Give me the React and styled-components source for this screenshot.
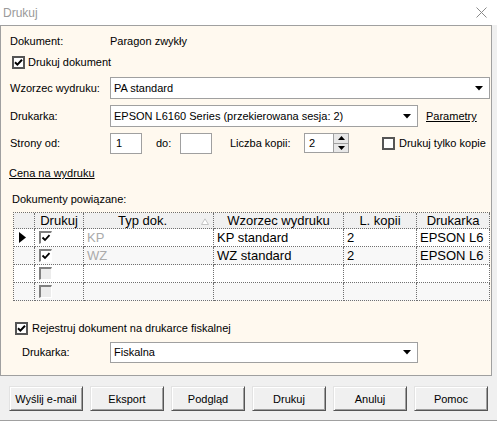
import React from 'react';
import styled, { createGlobalStyle } from 'styled-components';

const GlobalStyle = createGlobalStyle`
  html, body { margin: 0; padding: 0; background: #f0f0f0; }
  body {
    font-family: "Liberation Sans", Arial, sans-serif;
    font-size: 11px;
    color: #000;
  }
`;

const Window = styled.div`
  width: 497px;
  height: 421px;
  box-sizing: border-box;
  display: flex;
  flex-direction: column;
  background: #f0f0f0;
  border-bottom: 1px solid #a0a0a0;
  overflow: hidden;
`;

const TitleBar = styled.div`
  height: 25px;
  flex: none;
  background: #fff;
  display: flex;
  align-items: center;
  justify-content: space-between;
  padding: 0 10px 0 3px;
  color: #9a9a9a;
  font-size: 12px;
`;

const Panel = styled.div`
  height: 351px;
  width: 492px;
  flex: none;
  box-sizing: border-box;
  background: #fff9ef;
  border: 1px solid #a0a0a0;
  display: flex;
  flex-direction: column;
`;

const Row = styled.div`
  display: flex;
  align-items: center;
  height: ${p => p.$h || 16}px;
  margin-top: ${p => p.$mt || 0}px;
  padding-left: ${p => p.$pl ?? 9}px;
  white-space: nowrap;
`;

const Label = styled.span`
  width: ${p => p.$w || 100}px;
  flex: none;
`;

const Gap = styled.span`
  width: ${p => p.$w}px;
  flex: none;
`;

const LinkText = styled.span`
  text-decoration: underline;
  cursor: pointer;
`;

const Select = styled.div`
  width: ${p => p.$w}px;
  height: ${p => p.$h || 22}px;
  box-sizing: border-box;
  background: #fff;
  border: 1px solid #a0a0a0;
  display: flex;
  align-items: center;
  justify-content: space-between;
  padding: 0 6px 0 3px;
`;

const Arrow = () => (
  <svg width="8" height="5" viewBox="0 0 8 5">
    <path d="M0 0 H8 L4 4.5 Z" fill="#000" />
  </svg>
);

const TextBox = styled.div`
  width: ${p => p.$w}px;
  height: 21px;
  box-sizing: border-box;
  background: #fff;
  border: 1px solid #a0a0a0;
  display: flex;
  align-items: center;
  padding-left: 5px;
`;

const Spinner = styled.div`
  display: flex;
  height: 20px;
`;

const SpinText = styled(TextBox)`
  width: 30px;
  height: 20px;
  padding-left: 4px;
`;

const SpinButtons = styled.div`
  width: 15px;
  display: flex;
  flex-direction: column;
  border: 1px solid #a0a0a0;
  border-left: none;
  box-sizing: border-box;
`;

const SpinButton = styled.div`
  flex: 1;
  display: flex;
  align-items: center;
  justify-content: center;
  background: #e8e8e8;
  border-top: ${p => (p.$down ? '1px solid #a0a0a0' : 'none')};
`;

const CheckBox = styled.span`
  width: 13px;
  height: 13px;
  box-sizing: border-box;
  flex: none;
  border: 2px solid #555;
  background: #fff;
  display: flex;
  align-items: center;
  justify-content: center;
  margin-right: ${p => p.$mr ?? 3}px;
`;

const Check = () => (
  <svg width="9" height="9" viewBox="0 0 9 9">
    <path d="M1 4.2 L3.4 6.6 L8 1.8" stroke="#000" strokeWidth="2" fill="none" />
  </svg>
);

const Table = styled.div`
  margin: 5px 0 0 12px;
  width: 476px;
  display: grid;
  grid-template-columns: 21px 49px 130px 130px 73px 73px;
  grid-template-rows: 16px repeat(4, 18px);
  border-top: 1px dotted #6f6f6f;
  border-left: 1px dotted #6f6f6f;
  box-sizing: content-box;
  font-size: 13px;
`;

const Cell = styled.div`
  box-sizing: border-box;
  border-right: 1px dotted #6f6f6f;
  border-bottom: 1px dotted #6f6f6f;
  background: ${p => (p.$head ? '#f0f0f0' : p.$alt ? '#f8f8f8' : '#fff')};
  color: ${p => (p.$dim ? '#ababab' : '#000')};
  display: flex;
  align-items: center;
  justify-content: ${p => (p.$center ? 'center' : 'flex-start')};
  padding-left: ${p => (p.$center ? 0 : 3)}px;
  padding-right: ${p => (p.$shift ? p.$shift : 0)}px;
  overflow: hidden;
  white-space: nowrap;
  position: relative;
  line-height: 1;
`;

const SortMark = styled.svg`
  position: absolute;
  right: 4px;
  top: 5px;
`;

const GridCheck = styled.span`
  width: 13px;
  height: 13px;
  box-sizing: border-box;
  margin-left: 1px;
  border-top: 2px solid #808080;
  border-left: 2px solid #808080;
  border-right: 1px solid #fff;
  border-bottom: 1px solid #fff;
  background: ${p => (p.$off ? '#ececec' : '#fff')};
  display: flex;
  align-items: center;
  justify-content: center;
`;

const GridTick = () => (
  <svg width="10" height="10" viewBox="0 0 10 10">
    <path d="M1.5 4.5 L4 7 L8.5 2.2" stroke="#000" strokeWidth="1.8" fill="none" />
  </svg>
);

const Pointer = () => (
  <svg width="7" height="11" viewBox="0 0 7 11">
    <path d="M0 0 L7 5.5 L0 11 Z" fill="#000" />
  </svg>
);

const ButtonBar = styled.div`
  display: flex;
  gap: 7px;
  padding: 10px 0 0 9px;
`;

const Button = styled.button`
  width: 74px;
  height: 25px;
  padding: 0;
  font-family: "Liberation Sans", Arial, sans-serif;
  font-size: 11px;
  color: #000;
  background: #f0f0f0;
  border: 1px solid;
  border-color: #e3e3e3 #555 #555 #e3e3e3;
  box-shadow: inset 1px 1px #fff, inset -1px -1px #a0a0a0;
`;

const rows = [
  { typ: 'KP', wz: 'KP standard', kop: '2', dr: 'EPSON L6', on: true, current: true },
  { typ: 'WZ', wz: 'WZ standard', kop: '2', dr: 'EPSON L6', on: true },
  { typ: '', wz: '', kop: '', dr: '', on: false },
  { typ: '', wz: '', kop: '', dr: '', on: false },
];

export default function App() {
  return (
    <Window>
      <GlobalStyle />
      <TitleBar>
        <span>Drukuj</span>
        <svg width="11" height="11" viewBox="0 0 11 11">
          <path d="M0.5 0.5 L10.5 10.5 M10.5 0.5 L0.5 10.5" stroke="#8a8a8a" strokeWidth="1" />
        </svg>
      </TitleBar>

      <Panel>
        <Row $mt={7}>
          <Label>Dokument:</Label>
          <span>Paragon zwykły</span>
        </Row>
        <Row $mt={5} $pl={11}>
          <CheckBox><Check /></CheckBox>
          <span>Drukuj dokument</span>
        </Row>
        <Row $mt={7} $h={22}>
          <Label>Wzorzec wydruku:</Label>
          <Select $w={380}>
            <span>PA standard</span>
            <Arrow />
          </Select>
        </Row>
        <Row $mt={6} $h={22}>
          <Label>Drukarka:</Label>
          <Select $w={308}>
            <span>EPSON L6160 Series (przekierowana sesja: 2)</span>
            <Arrow />
          </Select>
          <Gap $w={8} />
          <LinkText>Parametry</LinkText>
        </Row>
        <Row $mt={5} $h={22}>
          <Label>Strony od:</Label>
          <TextBox $w={32}>1</TextBox>
          <Gap $w={14} />
          <Label $w={24}>do:</Label>
          <TextBox $w={32} />
          <Gap $w={18} />
          <Label $w={74}>Liczba kopii:</Label>
          <Spinner>
            <SpinText>2</SpinText>
            <SpinButtons>
              <SpinButton>
                <svg width="7" height="4" viewBox="0 0 7 4"><path d="M0 4 L3.5 0 L7 4 Z" fill="#000" /></svg>
              </SpinButton>
              <SpinButton $down>
                <svg width="7" height="4" viewBox="0 0 7 4"><path d="M0 0 H7 L3.5 4 Z" fill="#000" /></svg>
              </SpinButton>
            </SpinButtons>
          </Spinner>
          <Gap $w={33} />
          <CheckBox $mr={4} />
          <span>Drukuj tylko kopie</span>
        </Row>
        <Row $mt={11} $pl={8}>
          <LinkText>Cena na wydruku</LinkText>
        </Row>
        <Row $mt={10} $pl={11}>
          <span>Dokumenty powiązane:</span>
        </Row>

        <Table>
          <Cell $head />
          <Cell $head $center>Drukuj</Cell>
          <Cell $head $center $shift={12}>
            Typ dok.
            <SortMark width="8" height="7" viewBox="0 0 8 7">
              <path d="M0.5 6.5 L4 0.8 L7.5 6.5 Z" fill="#fff" stroke="#c4c4c4" strokeWidth="1" />
            </SortMark>
          </Cell>
          <Cell $head $center>Wzorzec wydruku</Cell>
          <Cell $head $center>L. kopii</Cell>
          <Cell $head $center>Drukarka</Cell>
          {rows.map((r, i) => (
            <React.Fragment key={i}>
              <Cell $alt={i % 2 === 1} style={{ paddingLeft: 5 }}>{r.current && <Pointer />}</Cell>
              <Cell $alt={i % 2 === 1}>
                <GridCheck $off={!r.on}>{r.on && <GridTick />}</GridCheck>
              </Cell>
              <Cell $alt={i % 2 === 1} $dim>{r.typ}</Cell>
              <Cell $alt={i % 2 === 1}>{r.wz}</Cell>
              <Cell $alt={i % 2 === 1}>{r.kop}</Cell>
              <Cell $alt={i % 2 === 1}>{r.dr}</Cell>
            </React.Fragment>
          ))}
        </Table>

        <Row $mt={19} $pl={14}>
          <CheckBox $mr={4}><Check /></CheckBox>
          <span>Rejestruj dokument na drukarce fiskalnej</span>
        </Row>
        <Row $mt={5} $h={22} $pl={21}>
          <Label $w={88}>Drukarka:</Label>
          <Select $w={308} $h={21}>
            <span>Fiskalna</span>
            <Arrow />
          </Select>
        </Row>
      </Panel>

      <ButtonBar>
        <Button>Wyślij e-mail</Button>
        <Button>Eksport</Button>
        <Button>Podgląd</Button>
        <Button>Drukuj</Button>
        <Button>Anuluj</Button>
        <Button>Pomoc</Button>
      </ButtonBar>
    </Window>
  );
}
